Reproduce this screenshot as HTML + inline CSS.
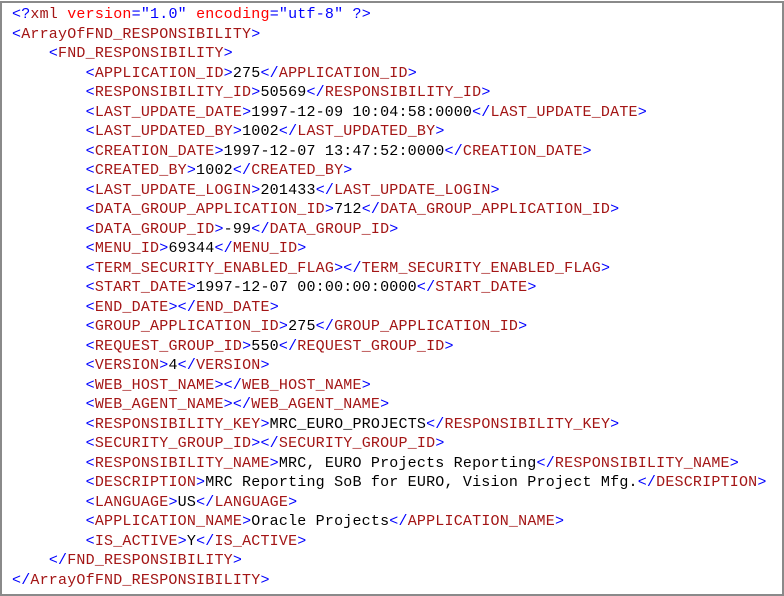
<html><head><style>
body{margin:0;background:#fff;width:784px;height:595px;overflow:hidden}
.f{position:absolute;left:0;top:1px;width:780px;height:591px;border:2px solid #8a8a8a}
pre{position:absolute;left:12px;top:5px;margin:0;font-family:"Liberation Mono",monospace;font-size:15px;line-height:19.5px;color:#000;letter-spacing:0.2px}
pre *{line-height:19.5px}
b{font-weight:normal;color:#0000ff}i{font-style:normal;color:#a31515}u{text-decoration:none;color:#ff0000}
</style></head><body><div class="f"></div><pre><b>&lt;?</b><i>xml</i> <u>version</u><b>="1.0"</b> <u>encoding</u><b>="utf-8"</b> <b>?&gt;</b>
<b>&lt;</b><i>ArrayOfFND_RESPONSIBILITY</i><b>&gt;</b>
    <b>&lt;</b><i>FND_RESPONSIBILITY</i><b>&gt;</b>
        <b>&lt;</b><i>APPLICATION_ID</i><b>&gt;</b>275<b>&lt;/</b><i>APPLICATION_ID</i><b>&gt;</b>
        <b>&lt;</b><i>RESPONSIBILITY_ID</i><b>&gt;</b>50569<b>&lt;/</b><i>RESPONSIBILITY_ID</i><b>&gt;</b>
        <b>&lt;</b><i>LAST_UPDATE_DATE</i><b>&gt;</b>1997-12-09 10:04:58:0000<b>&lt;/</b><i>LAST_UPDATE_DATE</i><b>&gt;</b>
        <b>&lt;</b><i>LAST_UPDATED_BY</i><b>&gt;</b>1002<b>&lt;/</b><i>LAST_UPDATED_BY</i><b>&gt;</b>
        <b>&lt;</b><i>CREATION_DATE</i><b>&gt;</b>1997-12-07 13:47:52:0000<b>&lt;/</b><i>CREATION_DATE</i><b>&gt;</b>
        <b>&lt;</b><i>CREATED_BY</i><b>&gt;</b>1002<b>&lt;/</b><i>CREATED_BY</i><b>&gt;</b>
        <b>&lt;</b><i>LAST_UPDATE_LOGIN</i><b>&gt;</b>201433<b>&lt;/</b><i>LAST_UPDATE_LOGIN</i><b>&gt;</b>
        <b>&lt;</b><i>DATA_GROUP_APPLICATION_ID</i><b>&gt;</b>712<b>&lt;/</b><i>DATA_GROUP_APPLICATION_ID</i><b>&gt;</b>
        <b>&lt;</b><i>DATA_GROUP_ID</i><b>&gt;</b>-99<b>&lt;/</b><i>DATA_GROUP_ID</i><b>&gt;</b>
        <b>&lt;</b><i>MENU_ID</i><b>&gt;</b>69344<b>&lt;/</b><i>MENU_ID</i><b>&gt;</b>
        <b>&lt;</b><i>TERM_SECURITY_ENABLED_FLAG</i><b>&gt;&lt;/</b><i>TERM_SECURITY_ENABLED_FLAG</i><b>&gt;</b>
        <b>&lt;</b><i>START_DATE</i><b>&gt;</b>1997-12-07 00:00:00:0000<b>&lt;/</b><i>START_DATE</i><b>&gt;</b>
        <b>&lt;</b><i>END_DATE</i><b>&gt;&lt;/</b><i>END_DATE</i><b>&gt;</b>
        <b>&lt;</b><i>GROUP_APPLICATION_ID</i><b>&gt;</b>275<b>&lt;/</b><i>GROUP_APPLICATION_ID</i><b>&gt;</b>
        <b>&lt;</b><i>REQUEST_GROUP_ID</i><b>&gt;</b>550<b>&lt;/</b><i>REQUEST_GROUP_ID</i><b>&gt;</b>
        <b>&lt;</b><i>VERSION</i><b>&gt;</b>4<b>&lt;/</b><i>VERSION</i><b>&gt;</b>
        <b>&lt;</b><i>WEB_HOST_NAME</i><b>&gt;&lt;/</b><i>WEB_HOST_NAME</i><b>&gt;</b>
        <b>&lt;</b><i>WEB_AGENT_NAME</i><b>&gt;&lt;/</b><i>WEB_AGENT_NAME</i><b>&gt;</b>
        <b>&lt;</b><i>RESPONSIBILITY_KEY</i><b>&gt;</b>MRC_EURO_PROJECTS<b>&lt;/</b><i>RESPONSIBILITY_KEY</i><b>&gt;</b>
        <b>&lt;</b><i>SECURITY_GROUP_ID</i><b>&gt;&lt;/</b><i>SECURITY_GROUP_ID</i><b>&gt;</b>
        <b>&lt;</b><i>RESPONSIBILITY_NAME</i><b>&gt;</b>MRC, EURO Projects Reporting<b>&lt;/</b><i>RESPONSIBILITY_NAME</i><b>&gt;</b>
        <b>&lt;</b><i>DESCRIPTION</i><b>&gt;</b>MRC Reporting SoB for EURO, Vision Project Mfg.<b>&lt;/</b><i>DESCRIPTION</i><b>&gt;</b>
        <b>&lt;</b><i>LANGUAGE</i><b>&gt;</b>US<b>&lt;/</b><i>LANGUAGE</i><b>&gt;</b>
        <b>&lt;</b><i>APPLICATION_NAME</i><b>&gt;</b>Oracle Projects<b>&lt;/</b><i>APPLICATION_NAME</i><b>&gt;</b>
        <b>&lt;</b><i>IS_ACTIVE</i><b>&gt;</b>Y<b>&lt;/</b><i>IS_ACTIVE</i><b>&gt;</b>
    <b>&lt;/</b><i>FND_RESPONSIBILITY</i><b>&gt;</b>
<b>&lt;/</b><i>ArrayOfFND_RESPONSIBILITY</i><b>&gt;</b></pre></body></html>
